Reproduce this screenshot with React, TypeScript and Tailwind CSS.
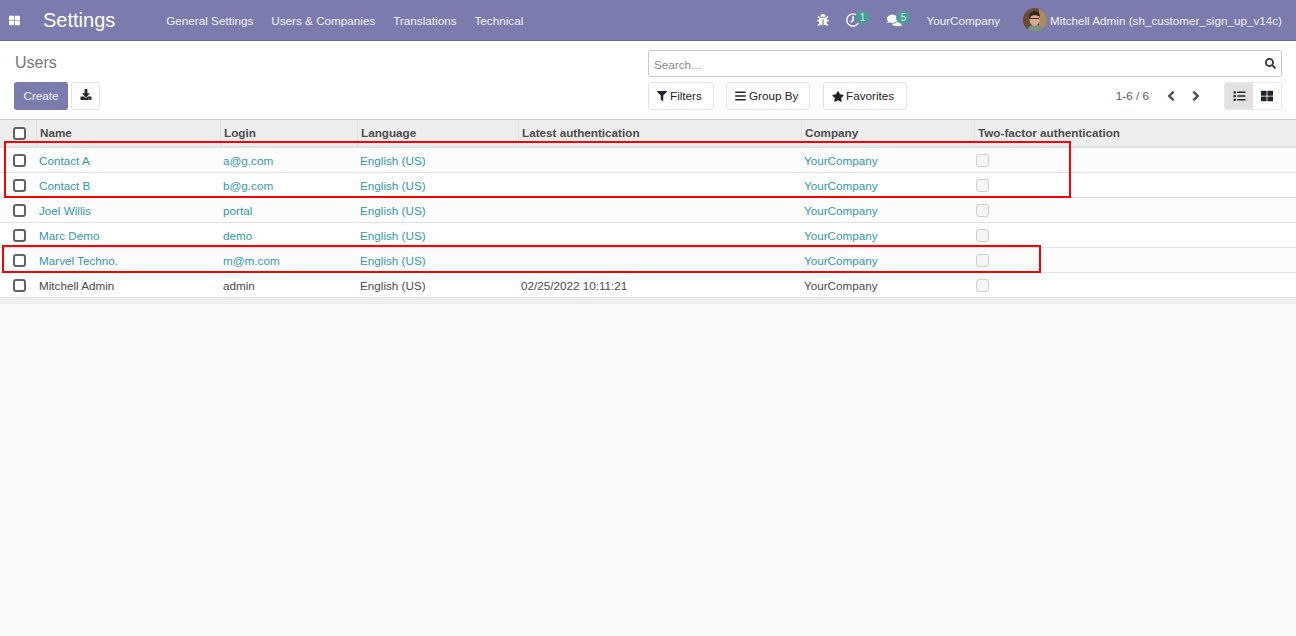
import { FaThLarge, FaBug, FaRegClock, FaComments, FaSearch, FaFilter, FaBars, FaStar, FaList, FaAngleLeft, FaAngleRight, FaDownload } from "react-icons/fa";

const menus = ["General Settings", "Users & Companies", "Translations", "Technical"];

const columns = [
  { label: "Name", width: "w-[184px]" },
  { label: "Login", width: "w-[137px]" },
  { label: "Language", width: "w-[161px]" },
  { label: "Latest authentication", width: "w-[283px]" },
  { label: "Company", width: "w-[173px]" },
  { label: "Two-factor authentication", width: "" },
];

const users = [
  { name: "Contact A", login: "a@g.com", auth: "" },
  { name: "Contact B", login: "b@g.com", auth: "" },
  { name: "Joel Willis", login: "portal", auth: "" },
  { name: "Marc Demo", login: "demo", auth: "" },
  { name: "Marvel Techno.", login: "m@m.com", auth: "" },
  { name: "Mitchell Admin", login: "admin", auth: "02/25/2022 10:11:21", active: true },
];

function Check() {
  return <span className="block h-[13px] w-[13px] rounded-[3px] border-2 border-[#5f636a] bg-white" />;
}

function Badge({ n }: { n: number }) {
  return (
    <span className="absolute -top-[2px] left-[9px] flex h-[13px] w-[14px] items-center justify-center rounded-full bg-[#4a9e97] text-[10px] text-[#d5ece9]">
      {n}
    </span>
  );
}

function Avatar() {
  return (
    <svg width="24" height="24" viewBox="0 0 24 24" className="rounded-full">
      <rect width="24" height="24" fill="#6b4a32" />
      <rect x="16" width="8" height="24" fill="#a98a5e" />
      <path d="M4 24c0-5 3-7 8-7s8 2 8 7z" fill="#7d8f87" />
      <ellipse cx="11.5" cy="11.5" rx="5" ry="6.5" fill="#d8a98c" />
      <path d="M6 10c0-5 3-7 6-7s5 2 5 6c-2-2-7-2-9-1l-1 3z" fill="#33261f" />
      <rect x="7" y="10" width="9" height="1" fill="#3b2f2a" />
    </svg>
  );
}

export default function App() {
  return (
    <div className="relative flex h-[636px] flex-col overflow-hidden bg-[#f9f9f9] font-['Liberation_Sans',sans-serif] text-[11.7px] text-[#4c4c4c]">
      {/* Navbar */}
      <nav className="flex h-[41px] shrink-0 items-center border-b border-[#6a6a97] bg-[#7c7bad] text-[#f0f0f7]">
        <FaThLarge className="ml-[9px] h-[11px] w-[11px] text-white" />
        <span className="ml-[23px] text-[20px] leading-none text-white">Settings</span>
        <div className="ml-[51px] mt-[1px] flex gap-[18px]">
          {menus.map((m) => (
            <span key={m}>{m}</span>
          ))}
        </div>
        <div className="ml-auto flex items-center">
          <FaBug className="h-[12px] w-[12px] text-white" />
          <span className="relative ml-[17px] h-[14px] w-[14px]">
            <FaRegClock className="h-[14px] w-[14px] -scale-x-100 text-white" />
            <Badge n={1} />
          </span>
          <span className="relative ml-[27px] h-[14px] w-[15px]">
            <FaComments className="h-[15px] w-[15px] text-white" />
            <Badge n={5} />
          </span>
          <span className="ml-[24px] mt-[1px]">YourCompany</span>
          <span className="ml-[23px] -mt-[1px]">
            <Avatar />
          </span>
          <span className="ml-[3px] mr-[14px] mt-[1px]">Mitchell Admin (sh_customer_sign_up_v14c)</span>
        </div>
      </nav>

      {/* Control panel */}
      <div className="flex h-[79px] shrink-0 border-b border-[#cfcfcf] bg-white">
        <div className="ml-[14px] flex w-[634px] flex-col">
          <div className="ml-[1px] mt-[12px] text-[16px] leading-[20px] text-[#777]">Users</div>
          <div className="mt-[9px] flex gap-[3px]">
            <button className="h-[28px] w-[54px] rounded-[3px] bg-[#7c7bad] text-[#f0f0f7]">Create</button>
            <button className="flex h-[28px] w-[29px] items-center justify-center rounded-[3px] border border-[#e3e3e3] bg-white">
              <FaDownload className="-mt-[3px] h-[11px] w-[12px] text-[#212529]" />
            </button>
          </div>
        </div>
        <div className="mr-[14px] flex flex-1 flex-col">
          <div className="mt-[9px] flex h-[27px] items-center justify-between rounded-[3px] border border-[#c9c9c9] pl-[5px] pr-[5px]">
            <span className="mt-[2px] text-[#8a8a8a]">Search...</span>
            <FaSearch className="h-[11px] w-[11px] text-[#333]" />
          </div>
          <div className="mt-[5px] flex items-center">
            <button className="flex h-[28px] w-[66px] items-center gap-[3px] rounded-[3px] border border-[#e3e3e3] pl-[8px] text-[#212529]">
              <FaFilter className="h-[10px] w-[10px]" />Filters
            </button>
            <button className="ml-[12px] flex h-[28px] w-[84px] items-center gap-[3px] rounded-[3px] border border-[#e3e3e3] pl-[8px] text-[#212529]">
              <FaBars className="h-[12px] w-[11px]" />Group By
            </button>
            <button className="ml-[13px] flex h-[28px] w-[84px] items-center gap-[2px] rounded-[3px] border border-[#e3e3e3] pl-[8px] text-[#212529]">
              <FaStar className="h-[11px] w-[12px]" />Favorites
            </button>
            <span className="ml-auto text-[#5a5a5a]">1-6 / 6</span>
            <FaAngleLeft className="ml-[17px] h-[16px] w-[10px] text-[#555]" />
            <FaAngleRight className="ml-[15px] h-[16px] w-[10px] text-[#555]" />
            <div className="ml-[23px] flex h-[28px] overflow-hidden rounded-[3px] border border-[#e8e8e8]">
              <span className="flex w-[28px] items-center justify-center bg-[#e2e2e2]">
                <FaList className="h-[12px] w-[13px] text-[#212529]" />
              </span>
              <span className="flex w-[28px] items-center justify-center bg-white">
                <FaThLarge className="h-[12px] w-[12px] text-[#212529]" />
              </span>
            </div>
          </div>
        </div>
      </div>

      {/* List view */}
      <table className="w-full table-fixed border-collapse">
        <thead>
          <tr className="h-[27px] border-b-[2px] border-[#dee2e6] bg-[#eeeeee]">
            <th className="w-[36px] px-[13px]">
              <Check />
            </th>
            {columns.map((c) => (
              <th key={c.label} className={`${c.width} border-l border-[#dee2e6] pl-[3.5px] pr-[3px] text-left font-bold text-[#4c4c4c]`}>
                {c.label}
              </th>
            ))}
          </tr>
        </thead>
        <tbody>
          {users.map((u, i) => {
            const tone = u.active ? "text-[#4c4c4c]" : "text-[#3399b0]";
            return (
              <tr key={u.name} className={`h-[25px] border-b border-[#dee2e6] ${i % 2 === 0 ? "bg-[#fcfcfc]" : "bg-white"}`}>
                <td className="px-[13px] pt-[2px]">
                  <Check />
                </td>
                <td className={`px-[3px] pt-[3px] ${tone}`}>{u.name}</td>
                <td className={`px-[3px] pt-[3px] ${tone}`}>{u.login}</td>
                <td className={`px-[3px] pt-[3px] ${tone}`}>English (US)</td>
                <td className="px-[3px] pt-[3px] text-[#4c4c4c]">{u.auth}</td>
                <td className={`px-[3px] pt-[3px] ${tone}`}>YourCompany</td>
                <td className="px-[2px] pt-[2px]">
                  <span className="block h-[13px] w-[13px] rounded-[3px] border border-[#cfcfcf] bg-[#f5f5f5]" />
                </td>
              </tr>
            );
          })}
        </tbody>
        <tfoot>
          <tr className="h-[7px] bg-[#eeeeee]">
            <td colSpan={7} />
          </tr>
        </tfoot>
      </table>

      {/* Red annotation boxes */}
      <div className="absolute left-[4px] top-[141px] h-[57px] w-[1067px] border-2 border-[#ff0000]" />
      <div className="absolute left-[2px] top-[245px] h-[28px] w-[1039px] border-2 border-[#ff0000]" />
    </div>
  );
}
